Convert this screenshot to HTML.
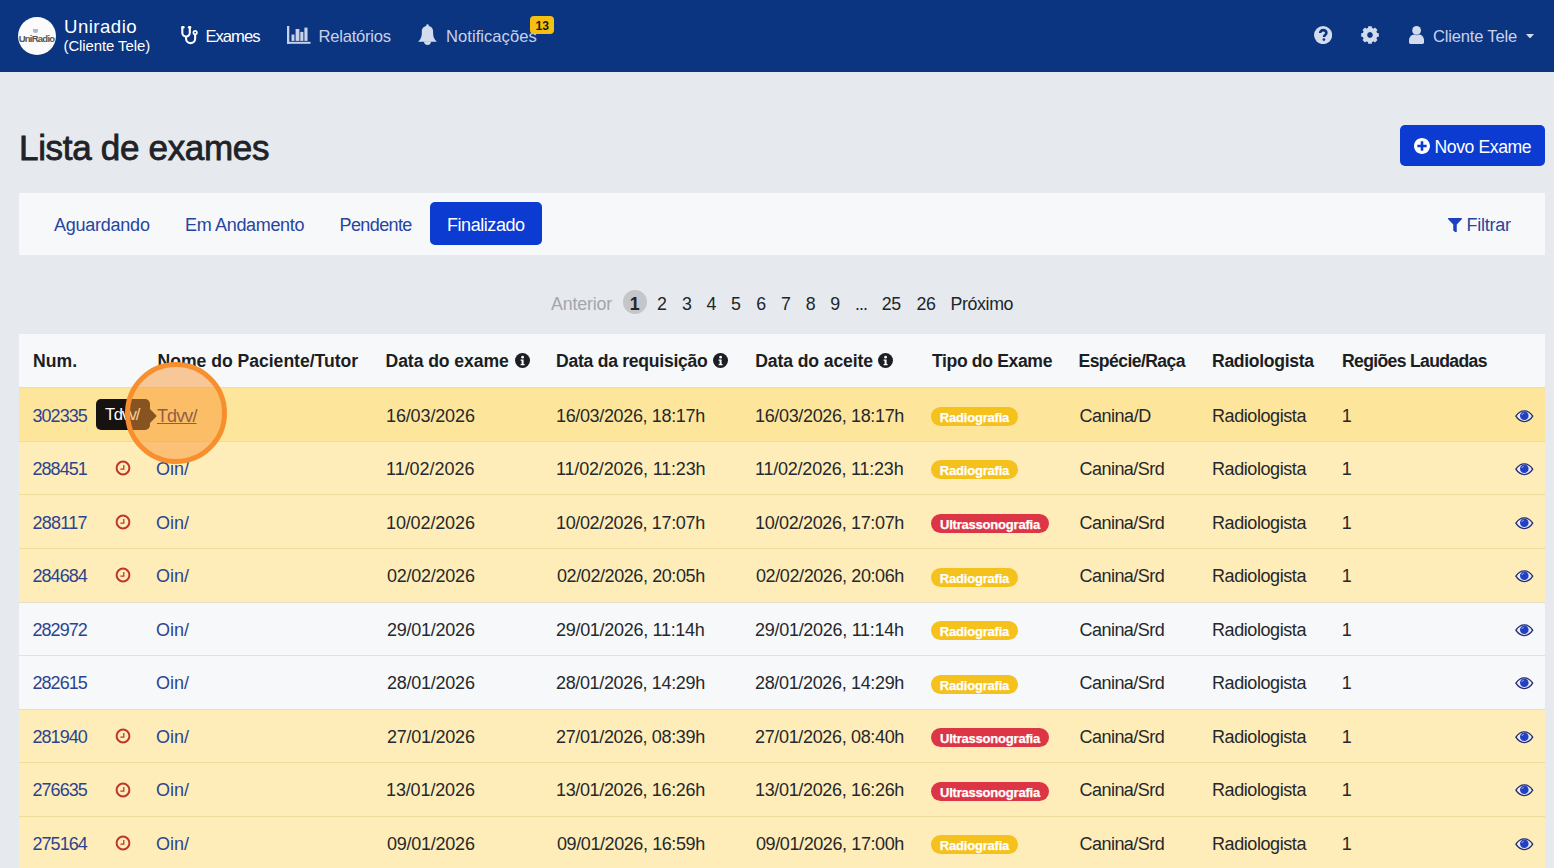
<!DOCTYPE html>
<html><head><meta charset="utf-8">
<style>
*{box-sizing:border-box;margin:0;padding:0}
html,body{width:1554px;height:868px;overflow:hidden;background:#e6e9ee;font-family:"Liberation Sans",sans-serif}
.t{position:absolute;white-space:nowrap;line-height:normal;z-index:2}
.a{position:absolute}
.bdg{position:absolute;height:19px;border-radius:9.5px;color:#fff;font-size:13px;font-weight:bold;text-align:center;line-height:19px;z-index:2}
.bdg span{position:relative;top:1px;letter-spacing:-0.2px;-webkit-text-stroke:0.25px #fff}
</style></head><body>
<div class="a" style="left:0;top:0;width:1554px;height:72px;background:#0b3581"></div>
<div class="a" style="left:18px;top:17px;width:38px;height:38px;border-radius:50%;background:#fbfbfb;overflow:hidden">
  <div class="a" style="left:15px;top:11.5px;width:5px;height:4px;background:#a9b5dc;border-radius:0 0 2.5px 2.5px"></div>
  <div class="a" style="left:-1px;top:16.3px;width:39px;text-align:center;font-size:9.5px;font-weight:bold;color:#555;letter-spacing:-0.75px;line-height:12px">UniRadio</div>
</div>
<!-- stethoscope -->
<svg class="a" style="left:176px;top:20px" width="28" height="30" viewBox="0 0 28 30"><path d="M6.3 7.5 V12.8 a3.75 3.75 0 0 0 7.5 0 V7.5" fill="none" stroke="#fff" stroke-width="2.1"/><path d="M10.05 16.4 V18.6 a4.55 4.55 0 0 0 9.1 0 V14.4" fill="none" stroke="#fff" stroke-width="2.1"/><circle cx="19.15" cy="12.6" r="1.75" fill="none" stroke="#fff" stroke-width="1.7"/><rect x="5.2" y="6" width="3.4" height="2.5" rx="1.2" fill="#fff"/><rect x="11.9" y="6" width="3.4" height="2.5" rx="1.2" fill="#fff"/></svg>
<!-- chart -->
<svg class="a" style="left:286.5px;top:26px" width="24" height="18" viewBox="0 0 24 18"><rect x="0" y="0" width="2.3" height="17.8" fill="#c8d2ea"/><rect x="0" y="15.8" width="23.5" height="2" fill="#c8d2ea"/><rect x="4.5" y="8.5" width="2.9" height="6.4" fill="#c8d2ea"/><rect x="8.6" y="3" width="3.8" height="11.9" fill="#c8d2ea"/><rect x="13.3" y="5.9" width="3.1" height="9" fill="#c8d2ea"/><rect x="17.4" y="1.6" width="3.1" height="13.3" fill="#c8d2ea"/></svg>
<!-- bell -->
<svg class="a" style="left:414px;top:14px" width="30" height="36" viewBox="0 0 30 36"><g fill="#d3dbee"><circle cx="13.5" cy="11.6" r="1.3"/><path d="M4.1 27.8 L23 27.8 C21.4 26.4 19.2 24 19.1 19.5 L19.1 17.3 C19.1 13.9 16.6 12 13.5 12 C10.4 12 7.8 13.9 7.8 17.3 L7.8 19.5 C7.7 24 5.6 26.4 4.1 27.8 Z"/><path d="M10 27.5 L17 27.5 C17 29.8 15.6 31 13.5 31 C11.4 31 10 29.8 10 27.5 Z"/></g></svg>
<div class="a" style="left:530px;top:16.1px;width:24px;height:18px;border-radius:4px;background:#f5c010;z-index:3"></div>
<!-- question -->
<svg class="a" style="left:1313.7px;top:25.9px" width="18.2" height="18.2" viewBox="0 0 18.2 18.2"><circle cx="9.1" cy="9.1" r="9.1" fill="#d3dbee"/><path d="M6.1 7.1 C6.1 5.1 7.5 4.1 9.2 4.1 C11 4.1 12.4 5.2 12.4 6.9 C12.4 8.9 10 9.2 10 10.9" fill="none" stroke="#0b3581" stroke-width="2.6"/><circle cx="9.9" cy="13.6" r="1.35" fill="#0b3581"/></svg>
<!-- gear -->
<svg class="a" style="left:1361.3px;top:26px" width="18" height="18" viewBox="0 0 18 18"><path fill="#d3dbee" fill-rule="evenodd" d="M15.59 6.96 L17.82 7.21 L17.82 10.79 L15.59 11.04 L15.10 12.22 L16.50 13.97 L13.97 16.50 L12.22 15.10 L11.04 15.59 L10.79 17.82 L7.21 17.82 L6.96 15.59 L5.78 15.10 L4.03 16.50 L1.50 13.97 L2.90 12.22 L2.41 11.04 L0.18 10.79 L0.18 7.21 L2.41 6.96 L2.90 5.78 L1.50 4.03 L4.03 1.50 L5.78 2.90 L6.96 2.41 L7.21 0.18 L10.79 0.18 L11.04 2.41 L12.22 2.90 L13.97 1.50 L16.50 4.03 L15.10 5.78Z M11.90 9.00 A2.9 2.9 0 1 0 6.10 9.00 A2.9 2.9 0 1 0 11.90 9.00Z"/><path fill="#d3dbee" fill-rule="evenodd" d="M16.30 9.00 A7.3 7.3 0 1 1 1.70 9.00 A7.3 7.3 0 1 1 16.30 9.00Z M11.90 9.00 A2.9 2.9 0 1 0 6.10 9.00 A2.9 2.9 0 1 0 11.90 9.00Z"/></svg>
<!-- user -->
<svg class="a" style="left:1409px;top:26px" width="15.2" height="18" viewBox="0 0 15.2 18"><g fill="#d3dbee"><circle cx="7.6" cy="4.4" r="4.4"/><path d="M0 14.8 C0 11.4 2.3 8.6 5.3 8.6 C6 9 6.8 9.2 7.6 9.2 C8.4 9.2 9.2 9 9.9 8.6 C12.9 8.6 15.2 11.4 15.2 14.8 V16.3 C15.2 17.2 14.5 17.9 13.6 17.9 H1.6 C0.7 17.9 0 17.2 0 16.3Z"/></g></svg>
<svg class="a" style="left:1525.5px;top:33.8px" width="8" height="4.5" viewBox="0 0 8 4.5"><path d="M0 0H8L4 4.5z" fill="#d3dbee"/></svg>

<!-- novo exame -->
<div class="a" style="left:1400px;top:125px;width:145px;height:41px;border-radius:5px;background:#0b3bd1"></div>
<svg class="a" style="left:1414px;top:138.4px;z-index:3" width="16" height="16" viewBox="8 8 496 496"><path fill="#fff" d="M256 8C119 8 8 119 8 256s111 248 248 248 248-111 248-248S393 8 256 8zm144 276c0 6.600-5.400 12-12 12h-92v92c0 6.600-5.400 12-12 12h-56c-6.600 0-12-5.400-12-12v-92h-92c-6.600 0-12-5.400-12-12v-56c0-6.600 5.400-12 12-12h92v-92c0-6.600 5.400-12 12-12h56c6.600 0 12 5.400 12 12v92h92c6.600 0 12 5.400 12 12v56z"/></svg>

<!-- tabs panel -->
<div class="a" style="left:19px;top:193px;width:1526px;height:61.5px;background:#f7f8fa"></div>
<div class="a" style="left:430px;top:202.2px;width:112px;height:43.3px;border-radius:5px;background:#0b3bd1"></div>
<svg class="a" style="left:1448px;top:217.5px" width="14" height="14.5" viewBox="0 0 512 512" preserveAspectRatio="none"><path fill="#1f3fc2" d="M487.976 0H24.028C2.710 0-8.047 25.866 7.058 40.971L192 225.941V432c0 7.831 3.821 15.170 10.237 19.662l80 55.980C298.020 518.690 320 507.493 320 487.980V225.941l184.947-184.970C520.021 25.896 509.338 0 487.976 0z"/></svg>

<!-- pagination circle -->
<div class="a" style="left:623px;top:290.2px;width:23.6px;height:23.4px;border-radius:50%;background:#c4c6c9"></div>

<!-- table -->
<div class="a" style="left:19px;top:334px;width:1526px;height:534px;background:#f7f8fa"></div>
<div class="a" style="left:19px;top:387.85px;width:1526px;height:53.55px;background:#fde69b"></div>
<div class="a" style="left:19px;top:441.40px;width:1526px;height:53.55px;background:#feedb8"></div>
<div class="a" style="left:19px;top:494.95px;width:1526px;height:53.55px;background:#feedb8"></div>
<div class="a" style="left:19px;top:548.50px;width:1526px;height:53.55px;background:#feedb8"></div>
<div class="a" style="left:19px;top:602.05px;width:1526px;height:53.55px;background:#f7f8fa"></div>
<div class="a" style="left:19px;top:655.60px;width:1526px;height:53.55px;background:#f7f8fa"></div>
<div class="a" style="left:19px;top:709.15px;width:1526px;height:53.55px;background:#feedb8"></div>
<div class="a" style="left:19px;top:762.70px;width:1526px;height:53.55px;background:#feedb8"></div>
<div class="a" style="left:19px;top:816.25px;width:1526px;height:53.55px;background:#feedb8"></div>
<div class="a" style="left:19px;top:440.90px;width:1526px;height:1px;background:#eddc9c"></div>
<div class="a" style="left:19px;top:494.45px;width:1526px;height:1px;background:#eddc9c"></div>
<div class="a" style="left:19px;top:548.00px;width:1526px;height:1px;background:#eddc9c"></div>
<div class="a" style="left:19px;top:601.55px;width:1526px;height:1px;background:#e6dfc4"></div>
<div class="a" style="left:19px;top:655.10px;width:1526px;height:1px;background:#dee1e5"></div>
<div class="a" style="left:19px;top:708.65px;width:1526px;height:1px;background:#e6dfc4"></div>
<div class="a" style="left:19px;top:762.20px;width:1526px;height:1px;background:#eddc9c"></div>
<div class="a" style="left:19px;top:815.75px;width:1526px;height:1px;background:#eddc9c"></div>
<div class="bdg" style="left:931px;top:406.90px;width:87px;background:#f5c11c"><span>Radiografia</span></div>
<svg class="a" style="left:1514.5px;top:409.50px" width="19" height="13" viewBox="0 0 19 13"><path d="M0.9 6.2 C3.6 1.9 6.4 0.9 9.3 0.9 C12.2 0.9 15 1.9 17.7 6.2 C15 10.5 12.2 11.6 9.3 11.6 C6.4 11.6 3.6 10.5 0.9 6.2Z" fill="#e8ebfb" stroke="#262b6c" stroke-width="1.35"/><circle cx="9.3" cy="5.8" r="4.3" fill="#2140c2"/><path d="M6.9 4.9 C7.2 3.9 7.9 3.3 8.7 3.2" fill="none" stroke="#b9c4f0" stroke-width="0.9"/></svg>
<svg class="a" style="left:114.6px;top:460.25px" width="16" height="16" viewBox="0 0 16 16"><circle cx="8" cy="8" r="6.4" fill="none" stroke="#bf3630" stroke-width="2"/><path d="M8.8 5V9H5.4" fill="none" stroke="#bf3630" stroke-width="1.25"/></svg>
<div class="bdg" style="left:931px;top:460.45px;width:87px;background:#f5c11c"><span>Radiografia</span></div>
<svg class="a" style="left:1514.5px;top:463.05px" width="19" height="13" viewBox="0 0 19 13"><path d="M0.9 6.2 C3.6 1.9 6.4 0.9 9.3 0.9 C12.2 0.9 15 1.9 17.7 6.2 C15 10.5 12.2 11.6 9.3 11.6 C6.4 11.6 3.6 10.5 0.9 6.2Z" fill="#e8ebfb" stroke="#262b6c" stroke-width="1.35"/><circle cx="9.3" cy="5.8" r="4.3" fill="#2140c2"/><path d="M6.9 4.9 C7.2 3.9 7.9 3.3 8.7 3.2" fill="none" stroke="#b9c4f0" stroke-width="0.9"/></svg>
<svg class="a" style="left:114.6px;top:513.80px" width="16" height="16" viewBox="0 0 16 16"><circle cx="8" cy="8" r="6.4" fill="none" stroke="#bf3630" stroke-width="2"/><path d="M8.8 5V9H5.4" fill="none" stroke="#bf3630" stroke-width="1.25"/></svg>
<div class="bdg" style="left:931px;top:514.00px;width:118px;background:#dc3545"><span>Ultrassonografia</span></div>
<svg class="a" style="left:1514.5px;top:516.60px" width="19" height="13" viewBox="0 0 19 13"><path d="M0.9 6.2 C3.6 1.9 6.4 0.9 9.3 0.9 C12.2 0.9 15 1.9 17.7 6.2 C15 10.5 12.2 11.6 9.3 11.6 C6.4 11.6 3.6 10.5 0.9 6.2Z" fill="#e8ebfb" stroke="#262b6c" stroke-width="1.35"/><circle cx="9.3" cy="5.8" r="4.3" fill="#2140c2"/><path d="M6.9 4.9 C7.2 3.9 7.9 3.3 8.7 3.2" fill="none" stroke="#b9c4f0" stroke-width="0.9"/></svg>
<svg class="a" style="left:114.6px;top:567.35px" width="16" height="16" viewBox="0 0 16 16"><circle cx="8" cy="8" r="6.4" fill="none" stroke="#bf3630" stroke-width="2"/><path d="M8.8 5V9H5.4" fill="none" stroke="#bf3630" stroke-width="1.25"/></svg>
<div class="bdg" style="left:931px;top:567.55px;width:87px;background:#f5c11c"><span>Radiografia</span></div>
<svg class="a" style="left:1514.5px;top:570.15px" width="19" height="13" viewBox="0 0 19 13"><path d="M0.9 6.2 C3.6 1.9 6.4 0.9 9.3 0.9 C12.2 0.9 15 1.9 17.7 6.2 C15 10.5 12.2 11.6 9.3 11.6 C6.4 11.6 3.6 10.5 0.9 6.2Z" fill="#e8ebfb" stroke="#262b6c" stroke-width="1.35"/><circle cx="9.3" cy="5.8" r="4.3" fill="#2140c2"/><path d="M6.9 4.9 C7.2 3.9 7.9 3.3 8.7 3.2" fill="none" stroke="#b9c4f0" stroke-width="0.9"/></svg>
<div class="bdg" style="left:931px;top:621.10px;width:87px;background:#f5c11c"><span>Radiografia</span></div>
<svg class="a" style="left:1514.5px;top:623.70px" width="19" height="13" viewBox="0 0 19 13"><path d="M0.9 6.2 C3.6 1.9 6.4 0.9 9.3 0.9 C12.2 0.9 15 1.9 17.7 6.2 C15 10.5 12.2 11.6 9.3 11.6 C6.4 11.6 3.6 10.5 0.9 6.2Z" fill="#e8ebfb" stroke="#262b6c" stroke-width="1.35"/><circle cx="9.3" cy="5.8" r="4.3" fill="#2140c2"/><path d="M6.9 4.9 C7.2 3.9 7.9 3.3 8.7 3.2" fill="none" stroke="#b9c4f0" stroke-width="0.9"/></svg>
<div class="bdg" style="left:931px;top:674.65px;width:87px;background:#f5c11c"><span>Radiografia</span></div>
<svg class="a" style="left:1514.5px;top:677.25px" width="19" height="13" viewBox="0 0 19 13"><path d="M0.9 6.2 C3.6 1.9 6.4 0.9 9.3 0.9 C12.2 0.9 15 1.9 17.7 6.2 C15 10.5 12.2 11.6 9.3 11.6 C6.4 11.6 3.6 10.5 0.9 6.2Z" fill="#e8ebfb" stroke="#262b6c" stroke-width="1.35"/><circle cx="9.3" cy="5.8" r="4.3" fill="#2140c2"/><path d="M6.9 4.9 C7.2 3.9 7.9 3.3 8.7 3.2" fill="none" stroke="#b9c4f0" stroke-width="0.9"/></svg>
<svg class="a" style="left:114.6px;top:728.00px" width="16" height="16" viewBox="0 0 16 16"><circle cx="8" cy="8" r="6.4" fill="none" stroke="#bf3630" stroke-width="2"/><path d="M8.8 5V9H5.4" fill="none" stroke="#bf3630" stroke-width="1.25"/></svg>
<div class="bdg" style="left:931px;top:728.20px;width:118px;background:#dc3545"><span>Ultrassonografia</span></div>
<svg class="a" style="left:1514.5px;top:730.80px" width="19" height="13" viewBox="0 0 19 13"><path d="M0.9 6.2 C3.6 1.9 6.4 0.9 9.3 0.9 C12.2 0.9 15 1.9 17.7 6.2 C15 10.5 12.2 11.6 9.3 11.6 C6.4 11.6 3.6 10.5 0.9 6.2Z" fill="#e8ebfb" stroke="#262b6c" stroke-width="1.35"/><circle cx="9.3" cy="5.8" r="4.3" fill="#2140c2"/><path d="M6.9 4.9 C7.2 3.9 7.9 3.3 8.7 3.2" fill="none" stroke="#b9c4f0" stroke-width="0.9"/></svg>
<svg class="a" style="left:114.6px;top:781.55px" width="16" height="16" viewBox="0 0 16 16"><circle cx="8" cy="8" r="6.4" fill="none" stroke="#bf3630" stroke-width="2"/><path d="M8.8 5V9H5.4" fill="none" stroke="#bf3630" stroke-width="1.25"/></svg>
<div class="bdg" style="left:931px;top:781.75px;width:118px;background:#dc3545"><span>Ultrassonografia</span></div>
<svg class="a" style="left:1514.5px;top:784.35px" width="19" height="13" viewBox="0 0 19 13"><path d="M0.9 6.2 C3.6 1.9 6.4 0.9 9.3 0.9 C12.2 0.9 15 1.9 17.7 6.2 C15 10.5 12.2 11.6 9.3 11.6 C6.4 11.6 3.6 10.5 0.9 6.2Z" fill="#e8ebfb" stroke="#262b6c" stroke-width="1.35"/><circle cx="9.3" cy="5.8" r="4.3" fill="#2140c2"/><path d="M6.9 4.9 C7.2 3.9 7.9 3.3 8.7 3.2" fill="none" stroke="#b9c4f0" stroke-width="0.9"/></svg>
<svg class="a" style="left:114.6px;top:835.10px" width="16" height="16" viewBox="0 0 16 16"><circle cx="8" cy="8" r="6.4" fill="none" stroke="#bf3630" stroke-width="2"/><path d="M8.8 5V9H5.4" fill="none" stroke="#bf3630" stroke-width="1.25"/></svg>
<div class="bdg" style="left:931px;top:835.30px;width:87px;background:#f5c11c"><span>Radiografia</span></div>
<svg class="a" style="left:1514.5px;top:837.90px" width="19" height="13" viewBox="0 0 19 13"><path d="M0.9 6.2 C3.6 1.9 6.4 0.9 9.3 0.9 C12.2 0.9 15 1.9 17.7 6.2 C15 10.5 12.2 11.6 9.3 11.6 C6.4 11.6 3.6 10.5 0.9 6.2Z" fill="#e8ebfb" stroke="#262b6c" stroke-width="1.35"/><circle cx="9.3" cy="5.8" r="4.3" fill="#2140c2"/><path d="M6.9 4.9 C7.2 3.9 7.9 3.3 8.7 3.2" fill="none" stroke="#b9c4f0" stroke-width="0.9"/></svg>
<div class="a" style="left:19px;top:386.8px;width:1526px;height:1.6px;background:#dcddd8;z-index:1"></div>
<svg class="a" style="left:514.5px;top:353px" width="15" height="15" viewBox="0 0 15 15"><circle cx="7.5" cy="7.5" r="7.5" fill="#1b1e22"/><circle cx="7.6" cy="4.2" r="1.35" fill="#fff"/><path d="M5.6 6.4 H8.6 V10.9 H9.6 V12.2 H5.6 V10.9 H6.6 V7.7 H5.6Z" fill="#fff"/></svg>
<svg class="a" style="left:713px;top:353px" width="15" height="15" viewBox="0 0 15 15"><circle cx="7.5" cy="7.5" r="7.5" fill="#1b1e22"/><circle cx="7.6" cy="4.2" r="1.35" fill="#fff"/><path d="M5.6 6.4 H8.6 V10.9 H9.6 V12.2 H5.6 V10.9 H6.6 V7.7 H5.6Z" fill="#fff"/></svg>
<svg class="a" style="left:878px;top:353px" width="15" height="15" viewBox="0 0 15 15"><circle cx="7.5" cy="7.5" r="7.5" fill="#1b1e22"/><circle cx="7.6" cy="4.2" r="1.35" fill="#fff"/><path d="M5.6 6.4 H8.6 V10.9 H9.6 V12.2 H5.6 V10.9 H6.6 V7.7 H5.6Z" fill="#fff"/></svg>
<!-- tooltip -->
<div class="a" style="left:96px;top:399px;width:54px;height:31.3px;border-radius:5px;background:#15120f;z-index:3"></div>
<svg class="a" style="left:149.5px;top:409px;z-index:3" width="7" height="14" viewBox="0 0 7 14"><path d="M0 0L6.8 7L0 14z" fill="#15120f"/></svg>

<div class="t" id="brand1" style="left:64.00px;top:15.77px;font-size:18.6px;letter-spacing:0.486px;font-weight:400;color:#fff;">Uniradio</div>
<div class="t" id="brand2" style="left:63.50px;top:38.18px;font-size:14.9px;letter-spacing:-0.062px;font-weight:400;color:#fff;">(Cliente Tele)</div>
<div class="t" id="nav1" style="left:205.50px;top:26.51px;font-size:16.6px;letter-spacing:-1.000px;font-weight:400;color:#fff;">Exames</div>
<div class="t" id="nav2" style="left:318.50px;top:26.51px;font-size:16.6px;letter-spacing:-0.244px;font-weight:400;color:#c8d2ea;">Relatórios</div>
<div class="t" id="nav3" style="left:446.00px;top:26.61px;font-size:16.6px;letter-spacing:0.036px;font-weight:400;color:#c8d2ea;">Notificações</div>
<div class="t" id="nav4" style="left:1433.00px;top:26.91px;font-size:16.6px;letter-spacing:-0.200px;font-weight:400;color:#c8d2ea;">Cliente Tele</div>
<div class="t" id="badge13" style="left:535.50px;top:18.76px;font-size:12.2px;letter-spacing:0.000px;font-weight:700;color:#1f1b10;z-index:4;">13</div>
<div class="t" id="title" style="left:19.00px;top:127.77px;font-size:35px;letter-spacing:-0.314px;font-weight:400;color:#1f2226;-webkit-text-stroke:0.8px #1f2226;">Lista de exames</div>
<div class="t" id="novo" style="left:1434.50px;top:136.69px;font-size:17.6px;letter-spacing:-0.400px;font-weight:400;color:#fff;">Novo Exame</div>
<div class="t" id="tab1" style="left:54.00px;top:215.12px;font-size:18px;letter-spacing:-0.244px;font-weight:400;color:#2645a0;">Aguardando</div>
<div class="t" id="tab2" style="left:185.00px;top:215.12px;font-size:18px;letter-spacing:-0.327px;font-weight:400;color:#2645a0;">Em Andamento</div>
<div class="t" id="tab3" style="left:339.50px;top:215.12px;font-size:18px;letter-spacing:-0.600px;font-weight:400;color:#2645a0;">Pendente</div>
<div class="t" id="tab4" style="left:447.00px;top:215.12px;font-size:18px;letter-spacing:-0.444px;font-weight:400;color:#fff;">Finalizado</div>
<div class="t" id="filtrar" style="left:1466.50px;top:215.12px;font-size:18px;letter-spacing:-0.267px;font-weight:400;color:#2645a0;">Filtrar</div>
<div class="t" id="pa" style="left:551.00px;top:293.61px;font-size:17.8px;letter-spacing:-0.171px;font-weight:400;color:#a3a6ab;">Anterior</div>
<div class="t" id="p1" style="left:629.85px;top:293.61px;font-size:17.8px;letter-spacing:0.000px;font-weight:700;color:#212529;">1</div>
<div class="t" id="p2" style="left:657.10px;top:293.61px;font-size:17.8px;letter-spacing:0.000px;font-weight:400;color:#212529;">2</div>
<div class="t" id="p3" style="left:681.90px;top:293.61px;font-size:17.8px;letter-spacing:0.000px;font-weight:400;color:#212529;">3</div>
<div class="t" id="p4" style="left:706.60px;top:293.61px;font-size:17.8px;letter-spacing:0.000px;font-weight:400;color:#212529;">4</div>
<div class="t" id="p5" style="left:731.10px;top:293.61px;font-size:17.8px;letter-spacing:0.000px;font-weight:400;color:#212529;">5</div>
<div class="t" id="p6" style="left:756.20px;top:293.61px;font-size:17.8px;letter-spacing:0.000px;font-weight:400;color:#212529;">6</div>
<div class="t" id="p7" style="left:780.90px;top:293.61px;font-size:17.8px;letter-spacing:0.000px;font-weight:400;color:#212529;">7</div>
<div class="t" id="p8" style="left:805.70px;top:293.61px;font-size:17.8px;letter-spacing:0.000px;font-weight:400;color:#212529;">8</div>
<div class="t" id="p9" style="left:830.30px;top:293.61px;font-size:17.8px;letter-spacing:0.000px;font-weight:400;color:#212529;">9</div>
<div class="t" id="pdots" style="left:855.00px;top:293.61px;font-size:17.8px;letter-spacing:-1.000px;font-weight:400;color:#212529;">...</div>
<div class="t" id="p25" style="left:881.85px;top:293.61px;font-size:17.8px;letter-spacing:-0.600px;font-weight:400;color:#212529;">25</div>
<div class="t" id="p26" style="left:916.60px;top:293.61px;font-size:17.8px;letter-spacing:-0.600px;font-weight:400;color:#212529;">26</div>
<div class="t" id="pnext" style="left:950.50px;top:293.61px;font-size:17.8px;letter-spacing:-0.367px;font-weight:400;color:#212529;">Próximo</div>
<div class="t" id="h1" style="left:33.00px;top:350.79px;font-size:17.6px;letter-spacing:0.067px;font-weight:700;color:#1b1e22;">Num.</div>
<div class="t" id="h2" style="left:157.50px;top:350.79px;font-size:17.6px;letter-spacing:-0.019px;font-weight:700;color:#1b1e22;">Nome do Paciente/Tutor</div>
<div class="t" id="h3" style="left:385.50px;top:350.79px;font-size:17.6px;letter-spacing:-0.067px;font-weight:700;color:#1b1e22;">Data do exame</div>
<div class="t" id="h4" style="left:556.00px;top:350.79px;font-size:17.6px;letter-spacing:-0.271px;font-weight:700;color:#1b1e22;">Data da requisição</div>
<div class="t" id="h5" style="left:755.25px;top:350.79px;font-size:17.6px;letter-spacing:-0.115px;font-weight:700;color:#1b1e22;">Data do aceite</div>
<div class="t" id="h6" style="left:932.00px;top:350.79px;font-size:17.6px;letter-spacing:-0.367px;font-weight:700;color:#1b1e22;">Tipo do Exame</div>
<div class="t" id="h7" style="left:1078.50px;top:350.79px;font-size:17.6px;letter-spacing:-0.582px;font-weight:700;color:#1b1e22;">Espécie/Raça</div>
<div class="t" id="h8" style="left:1212.00px;top:350.79px;font-size:17.6px;letter-spacing:-0.327px;font-weight:700;color:#1b1e22;">Radiologista</div>
<div class="t" id="h9" style="left:1342.00px;top:350.79px;font-size:17.6px;letter-spacing:-0.667px;font-weight:700;color:#1b1e22;">Regiões Laudadas</div>
<div class="t" id="r0num" style="left:32.50px;top:405.82px;font-size:18.0px;letter-spacing:-0.960px;font-weight:400;color:#2c448f;">302335</div>
<div class="t" id="r0name" style="left:157.00px;top:405.82px;font-size:18.0px;letter-spacing:-0.900px;font-weight:400;color:#2a2450;text-decoration:underline;text-underline-offset:1px;">Tdvv/</div>
<div class="t" id="r0de" style="left:386.00px;top:405.82px;font-size:18.0px;letter-spacing:-0.133px;font-weight:400;color:#25282c;">16/03/2026</div>
<div class="t" id="r0dr" style="left:556.00px;top:405.82px;font-size:18.0px;letter-spacing:-0.353px;font-weight:400;color:#25282c;">16/03/2026, 18:17h</div>
<div class="t" id="r0da" style="left:755.00px;top:405.82px;font-size:18.0px;letter-spacing:-0.341px;font-weight:400;color:#25282c;">16/03/2026, 18:17h</div>
<div class="t" id="r0esp" style="left:1079.50px;top:405.82px;font-size:18.0px;letter-spacing:-0.486px;font-weight:400;color:#25282c;">Canina/D</div>
<div class="t" id="r0rad" style="left:1212.00px;top:405.82px;font-size:18.0px;letter-spacing:-0.418px;font-weight:400;color:#25282c;">Radiologista</div>
<div class="t" id="r0one" style="left:1341.65px;top:405.82px;font-size:18.0px;letter-spacing:0.000px;font-weight:400;color:#25282c;">1</div>
<div class="t" id="r1num" style="left:32.50px;top:459.32px;font-size:18.0px;letter-spacing:-0.960px;font-weight:400;color:#2c448f;">288451</div>
<div class="t" id="r1name" style="left:156.00px;top:459.32px;font-size:18.0px;letter-spacing:0.000px;font-weight:400;color:#2c448f;">Oin/</div>
<div class="t" id="r1de" style="left:386.00px;top:459.32px;font-size:18.0px;letter-spacing:-0.022px;font-weight:400;color:#25282c;">11/02/2026</div>
<div class="t" id="r1dr" style="left:556.00px;top:459.32px;font-size:18.0px;letter-spacing:-0.176px;font-weight:400;color:#25282c;">11/02/2026, 11:23h</div>
<div class="t" id="r1da" style="left:755.00px;top:459.32px;font-size:18.0px;letter-spacing:-0.224px;font-weight:400;color:#25282c;">11/02/2026, 11:23h</div>
<div class="t" id="r1esp" style="left:1079.50px;top:459.32px;font-size:18.0px;letter-spacing:-0.533px;font-weight:400;color:#25282c;">Canina/Srd</div>
<div class="t" id="r1rad" style="left:1212.00px;top:459.32px;font-size:18.0px;letter-spacing:-0.418px;font-weight:400;color:#25282c;">Radiologista</div>
<div class="t" id="r1one" style="left:1341.65px;top:459.32px;font-size:18.0px;letter-spacing:0.000px;font-weight:400;color:#25282c;">1</div>
<div class="t" id="r2num" style="left:32.50px;top:512.82px;font-size:18.0px;letter-spacing:-0.760px;font-weight:400;color:#2c448f;">288117</div>
<div class="t" id="r2name" style="left:156.00px;top:512.82px;font-size:18.0px;letter-spacing:0.000px;font-weight:400;color:#2c448f;">Oin/</div>
<div class="t" id="r2de" style="left:386.00px;top:512.82px;font-size:18.0px;letter-spacing:-0.133px;font-weight:400;color:#25282c;">10/02/2026</div>
<div class="t" id="r2dr" style="left:556.00px;top:512.82px;font-size:18.0px;letter-spacing:-0.353px;font-weight:400;color:#25282c;">10/02/2026, 17:07h</div>
<div class="t" id="r2da" style="left:755.00px;top:512.82px;font-size:18.0px;letter-spacing:-0.341px;font-weight:400;color:#25282c;">10/02/2026, 17:07h</div>
<div class="t" id="r2esp" style="left:1079.50px;top:512.82px;font-size:18.0px;letter-spacing:-0.533px;font-weight:400;color:#25282c;">Canina/Srd</div>
<div class="t" id="r2rad" style="left:1212.00px;top:512.82px;font-size:18.0px;letter-spacing:-0.418px;font-weight:400;color:#25282c;">Radiologista</div>
<div class="t" id="r2one" style="left:1341.65px;top:512.82px;font-size:18.0px;letter-spacing:0.000px;font-weight:400;color:#25282c;">1</div>
<div class="t" id="r3num" style="left:32.50px;top:566.32px;font-size:18.0px;letter-spacing:-0.960px;font-weight:400;color:#2c448f;">284684</div>
<div class="t" id="r3name" style="left:156.00px;top:566.32px;font-size:18.0px;letter-spacing:0.000px;font-weight:400;color:#2c448f;">Oin/</div>
<div class="t" id="r3de" style="left:387.00px;top:566.32px;font-size:18.0px;letter-spacing:-0.244px;font-weight:400;color:#25282c;">02/02/2026</div>
<div class="t" id="r3dr" style="left:557.00px;top:566.32px;font-size:18.0px;letter-spacing:-0.412px;font-weight:400;color:#25282c;">02/02/2026, 20:05h</div>
<div class="t" id="r3da" style="left:756.00px;top:566.32px;font-size:18.0px;letter-spacing:-0.400px;font-weight:400;color:#25282c;">02/02/2026, 20:06h</div>
<div class="t" id="r3esp" style="left:1079.50px;top:566.32px;font-size:18.0px;letter-spacing:-0.533px;font-weight:400;color:#25282c;">Canina/Srd</div>
<div class="t" id="r3rad" style="left:1212.00px;top:566.32px;font-size:18.0px;letter-spacing:-0.418px;font-weight:400;color:#25282c;">Radiologista</div>
<div class="t" id="r3one" style="left:1341.65px;top:566.32px;font-size:18.0px;letter-spacing:0.000px;font-weight:400;color:#25282c;">1</div>
<div class="t" id="r4num" style="left:32.50px;top:619.82px;font-size:18.0px;letter-spacing:-0.960px;font-weight:400;color:#2c448f;">282972</div>
<div class="t" id="r4name" style="left:156.00px;top:619.82px;font-size:18.0px;letter-spacing:0.000px;font-weight:400;color:#2c448f;">Oin/</div>
<div class="t" id="r4de" style="left:387.00px;top:619.82px;font-size:18.0px;letter-spacing:-0.244px;font-weight:400;color:#25282c;">29/01/2026</div>
<div class="t" id="r4dr" style="left:556.00px;top:619.82px;font-size:18.0px;letter-spacing:-0.294px;font-weight:400;color:#25282c;">29/01/2026, 11:14h</div>
<div class="t" id="r4da" style="left:755.00px;top:619.82px;font-size:18.0px;letter-spacing:-0.282px;font-weight:400;color:#25282c;">29/01/2026, 11:14h</div>
<div class="t" id="r4esp" style="left:1079.50px;top:619.82px;font-size:18.0px;letter-spacing:-0.533px;font-weight:400;color:#25282c;">Canina/Srd</div>
<div class="t" id="r4rad" style="left:1212.00px;top:619.82px;font-size:18.0px;letter-spacing:-0.418px;font-weight:400;color:#25282c;">Radiologista</div>
<div class="t" id="r4one" style="left:1341.65px;top:619.82px;font-size:18.0px;letter-spacing:0.000px;font-weight:400;color:#25282c;">1</div>
<div class="t" id="r5num" style="left:32.50px;top:673.32px;font-size:18.0px;letter-spacing:-0.960px;font-weight:400;color:#2c448f;">282615</div>
<div class="t" id="r5name" style="left:156.00px;top:673.32px;font-size:18.0px;letter-spacing:0.000px;font-weight:400;color:#2c448f;">Oin/</div>
<div class="t" id="r5de" style="left:387.00px;top:673.32px;font-size:18.0px;letter-spacing:-0.244px;font-weight:400;color:#25282c;">28/01/2026</div>
<div class="t" id="r5dr" style="left:556.00px;top:673.32px;font-size:18.0px;letter-spacing:-0.353px;font-weight:400;color:#25282c;">28/01/2026, 14:29h</div>
<div class="t" id="r5da" style="left:755.00px;top:673.32px;font-size:18.0px;letter-spacing:-0.341px;font-weight:400;color:#25282c;">28/01/2026, 14:29h</div>
<div class="t" id="r5esp" style="left:1079.50px;top:673.32px;font-size:18.0px;letter-spacing:-0.533px;font-weight:400;color:#25282c;">Canina/Srd</div>
<div class="t" id="r5rad" style="left:1212.00px;top:673.32px;font-size:18.0px;letter-spacing:-0.418px;font-weight:400;color:#25282c;">Radiologista</div>
<div class="t" id="r5one" style="left:1341.65px;top:673.32px;font-size:18.0px;letter-spacing:0.000px;font-weight:400;color:#25282c;">1</div>
<div class="t" id="r6num" style="left:32.50px;top:726.82px;font-size:18.0px;letter-spacing:-0.960px;font-weight:400;color:#2c448f;">281940</div>
<div class="t" id="r6name" style="left:156.00px;top:726.82px;font-size:18.0px;letter-spacing:0.000px;font-weight:400;color:#2c448f;">Oin/</div>
<div class="t" id="r6de" style="left:387.00px;top:726.82px;font-size:18.0px;letter-spacing:-0.244px;font-weight:400;color:#25282c;">27/01/2026</div>
<div class="t" id="r6dr" style="left:556.00px;top:726.82px;font-size:18.0px;letter-spacing:-0.353px;font-weight:400;color:#25282c;">27/01/2026, 08:39h</div>
<div class="t" id="r6da" style="left:755.00px;top:726.82px;font-size:18.0px;letter-spacing:-0.341px;font-weight:400;color:#25282c;">27/01/2026, 08:40h</div>
<div class="t" id="r6esp" style="left:1079.50px;top:726.82px;font-size:18.0px;letter-spacing:-0.533px;font-weight:400;color:#25282c;">Canina/Srd</div>
<div class="t" id="r6rad" style="left:1212.00px;top:726.82px;font-size:18.0px;letter-spacing:-0.418px;font-weight:400;color:#25282c;">Radiologista</div>
<div class="t" id="r6one" style="left:1341.65px;top:726.82px;font-size:18.0px;letter-spacing:0.000px;font-weight:400;color:#25282c;">1</div>
<div class="t" id="r7num" style="left:32.50px;top:780.32px;font-size:18.0px;letter-spacing:-0.960px;font-weight:400;color:#2c448f;">276635</div>
<div class="t" id="r7name" style="left:156.00px;top:780.32px;font-size:18.0px;letter-spacing:0.000px;font-weight:400;color:#2c448f;">Oin/</div>
<div class="t" id="r7de" style="left:386.00px;top:780.32px;font-size:18.0px;letter-spacing:-0.133px;font-weight:400;color:#25282c;">13/01/2026</div>
<div class="t" id="r7dr" style="left:556.00px;top:780.32px;font-size:18.0px;letter-spacing:-0.353px;font-weight:400;color:#25282c;">13/01/2026, 16:26h</div>
<div class="t" id="r7da" style="left:755.00px;top:780.32px;font-size:18.0px;letter-spacing:-0.341px;font-weight:400;color:#25282c;">13/01/2026, 16:26h</div>
<div class="t" id="r7esp" style="left:1079.50px;top:780.32px;font-size:18.0px;letter-spacing:-0.533px;font-weight:400;color:#25282c;">Canina/Srd</div>
<div class="t" id="r7rad" style="left:1212.00px;top:780.32px;font-size:18.0px;letter-spacing:-0.418px;font-weight:400;color:#25282c;">Radiologista</div>
<div class="t" id="r7one" style="left:1341.65px;top:780.32px;font-size:18.0px;letter-spacing:0.000px;font-weight:400;color:#25282c;">1</div>
<div class="t" id="r8num" style="left:32.50px;top:833.82px;font-size:18.0px;letter-spacing:-0.960px;font-weight:400;color:#2c448f;">275164</div>
<div class="t" id="r8name" style="left:156.00px;top:833.82px;font-size:18.0px;letter-spacing:0.000px;font-weight:400;color:#2c448f;">Oin/</div>
<div class="t" id="r8de" style="left:387.00px;top:833.82px;font-size:18.0px;letter-spacing:-0.244px;font-weight:400;color:#25282c;">09/01/2026</div>
<div class="t" id="r8dr" style="left:557.00px;top:833.82px;font-size:18.0px;letter-spacing:-0.412px;font-weight:400;color:#25282c;">09/01/2026, 16:59h</div>
<div class="t" id="r8da" style="left:756.00px;top:833.82px;font-size:18.0px;letter-spacing:-0.400px;font-weight:400;color:#25282c;">09/01/2026, 17:00h</div>
<div class="t" id="r8esp" style="left:1079.50px;top:833.82px;font-size:18.0px;letter-spacing:-0.533px;font-weight:400;color:#25282c;">Canina/Srd</div>
<div class="t" id="r8rad" style="left:1212.00px;top:833.82px;font-size:18.0px;letter-spacing:-0.418px;font-weight:400;color:#25282c;">Radiologista</div>
<div class="t" id="r8one" style="left:1341.65px;top:833.82px;font-size:18.0px;letter-spacing:0.000px;font-weight:400;color:#25282c;">1</div>
<div class="t" id="tip" style="left:104.90px;top:405.01px;font-size:16.6px;letter-spacing:-1.250px;font-weight:400;color:#fff;z-index:4;">Tdvv/</div>

<!-- click overlay -->
<div class="a" style="left:124.6px;top:362px;width:102.1px;height:102.1px;border-radius:50%;border:5.7px solid #f78f2e;background:rgba(250,150,52,0.5);z-index:10"></div>
</body></html>
